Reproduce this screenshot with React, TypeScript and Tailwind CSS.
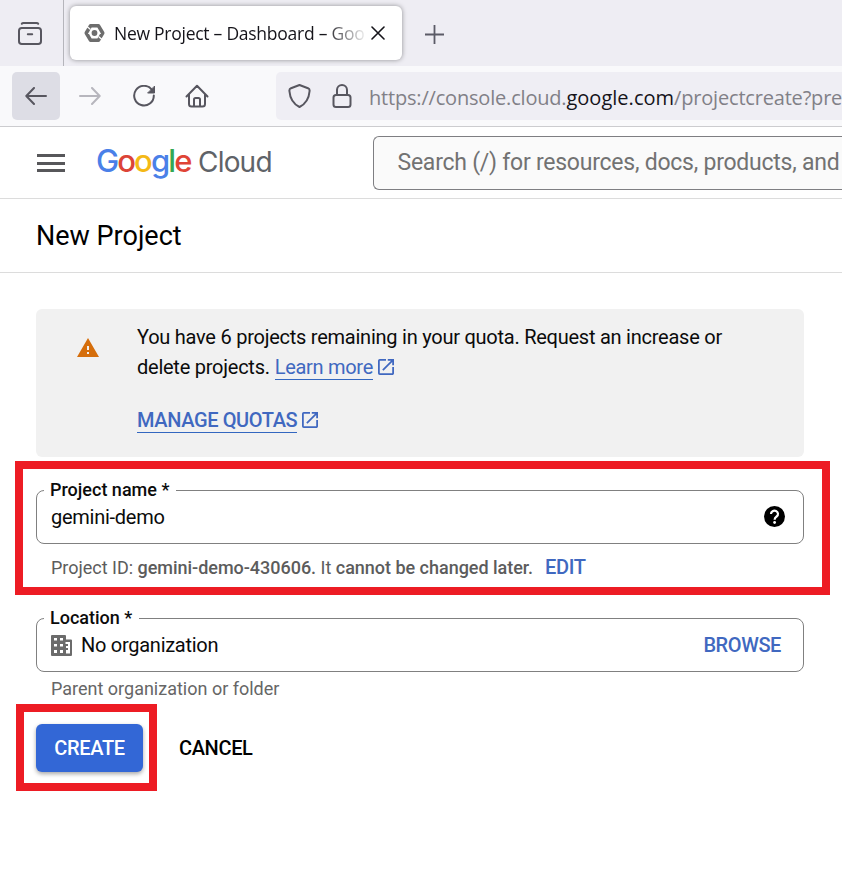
import React from "react";

const roboto = "font-['Roboto','Liberation_Sans',sans-serif]";
const segoe = "font-['Open_Sans','Noto_Sans',sans-serif]";

function Launch({ className }: { className: string }) {
  return (
    <svg viewBox="3 3 18 18" className={className} fill="currentColor">
      <path d="M19 19H5V5h7V3H5a2 2 0 0 0-2 2v14a2 2 0 0 0 2 2h14c1.1 0 2-.9 2-2v-7h-2v7zM14 3v2h3.59l-9.83 9.83 1.41 1.41L19 6.41V10h2V3h-7z" />
    </svg>
  );
}

function TabBar() {
  return (
    <div className={`flex h-[66px] bg-[#eeedf3] ${segoe}`}>
      <div className="flex h-full w-16 shrink-0 border-r border-[#b5b5bb] pl-[18px] pt-[22px]">
        <svg width="24" height="24" viewBox="0 0 24 24" fill="none" stroke="#57565f" strokeWidth="2" strokeLinecap="round">
          <path d="M3.800 1.800Q4.200 1 5.500 1h13Q19.800 1 20.200 1.800M9.800 12.200h4.400" />
          <rect x="1" y="6" width="22" height="16" rx="2.800" />
        </svg>
      </div>
      <div className="ml-1.5 mt-1.5 flex h-[54px] w-[332px] items-center rounded-[6px] bg-white pl-3.5 shadow-[0_0_5px_rgba(0,0,0,0.4)]">
        <svg width="21" height="20" viewBox="0 0 21 20">
          <path fill="none" stroke="#6d6d6d" strokeWidth="3.600" strokeLinejoin="round" d="M6.500 2.800h8l4.200 7.200-4.200 7.200h-8L2.300 10z" />
          <path stroke="#fff" strokeWidth="1.200" d="m3 3.500 3.500 3M18 16.500l-3.500-3" />
          <circle cx="10.500" cy="10" r="2.900" fill="#6d6d6d" />
        </svg>
        <div className="ml-[9px] w-[254px] overflow-hidden whitespace-nowrap text-[17.5px] tracking-[-0.260px] text-[#15141a] [mask-image:linear-gradient(to_right,black_210px,transparent_254px)]">
          New Project – Dashboard – Goo
        </div>
        <svg className="ml-[3px]" width="14" height="14" viewBox="0 0 14 14" stroke="#15141a" strokeWidth="1.600" strokeLinecap="round">
          <path d="m1 1 12 12M13 1 1 13" />
        </svg>
      </div>
      <svg className="ml-[23px] mt-[25px]" width="19" height="19" viewBox="0 0 19 19" stroke="#5b5b66" strokeWidth="1.800">
        <path d="M9.500 0v19M0 9.500h19" />
      </svg>
    </div>
  );
}

function Toolbar() {
  return (
    <div className={`flex h-[61px] items-center border-b border-[#cccccf] bg-[#f9f9fb] ${segoe}`}>
      <div className="ml-3 flex size-12 shrink-0 items-center justify-center rounded-[5px] bg-[#dddde5]">
        <svg width="22" height="18" viewBox="0 0 22 18" fill="none" stroke="#57565f" strokeWidth="2" strokeLinecap="round" strokeLinejoin="round">
          <path d="M21 9H1.500M9 1 1.300 9 9 17" />
        </svg>
      </div>
      <svg className="ml-[19px] shrink-0" width="22" height="18" viewBox="0 0 22 18" fill="none" stroke="#b7b6bd" strokeWidth="2" strokeLinecap="round" strokeLinejoin="round">
        <path d="M1 9h19.500M13 1l7.700 8L13 17" />
      </svg>
      <svg className="ml-8 shrink-0" width="23" height="22" viewBox="0 0 23 22" fill="none" stroke="#57565f" strokeWidth="2" strokeLinecap="round">
        <path d="M18.800 4.700A9.800 9.800 0 1 0 20.800 10.500" />
        <path d="M21.500 1.500V8H15z" fill="#57565f" strokeWidth="1" strokeLinejoin="round" />
      </svg>
      <svg className="ml-[29px] shrink-0" width="24" height="24" viewBox="0 0 24 24" fill="none" stroke="#57565f" strokeWidth="2" strokeLinecap="round" strokeLinejoin="round">
        <path d="M1.500 12.500 12 1.800l10.500 10.700M4 10.500V20a2.500 2.500 0 0 0 2.500 2.500h11A2.500 2.500 0 0 0 20 20v-9.500M9 22v-6.500q0-1.500 1.500-1.500h3q1.500 0 1.500 1.500V22" />
      </svg>
      <div className="ml-[67px] flex h-12 min-w-0 flex-1 items-center overflow-hidden rounded-l-[5px] bg-[#efeef4] pl-[12px]">
        <svg className="shrink-0" width="23" height="24" viewBox="0 0 23 24" fill="none" stroke="#57565f" strokeWidth="2" strokeLinejoin="round">
          <path d="M11.500 1 20 4.200Q21.800 5 21.600 7C21 14.500 17.500 20 11.500 23 5.500 20 2 14.500 1.400 7Q1.200 5 3 4.200z" />
        </svg>
        <svg className="ml-[21px] shrink-0" width="20" height="24" viewBox="0 0 20 24" fill="none" stroke="#57565f" strokeWidth="2">
          <rect x="1.500" y="11" width="17" height="12" rx="2.500" />
          <path d="M5 11V6a5 5 0 0 1 10 0v5" />
        </svg>
        <div className="ml-[17px] whitespace-nowrap pt-[3px] text-[20px] tracking-[-0.190px] text-[#818087]">
          https://console.cloud.<span className="tracking-[0.020px] text-[#15141a]">google.com</span>/projectcreate?pre
        </div>
      </div>
    </div>
  );
}

function CloudHeader() {
  return (
    <header className="flex h-[72px] border-b border-[#dcdcdc] bg-white">
      <div className="ml-[37px] mt-[27px] flex h-[18px] w-7 shrink-0 flex-col justify-between">
        <i className="h-[3px] bg-[#57575a]" />
        <i className="h-[3px] bg-[#57575a]" />
        <i className="h-[3px] bg-[#57575a]" />
      </div>
      <div className="ml-[31px] mt-[14px] flex w-[181px] shrink-0 items-baseline whitespace-nowrap font-['Inter',sans-serif] leading-[40px]">
        <span className="w-[102px] text-[31px] font-medium tracking-[-1.900px]">
          <span className="text-[#4a80e8]">G</span>
          <span className="text-[#dc4437]">o</span>
          <span className="text-[#f4b916]">o</span>
          <span className="text-[#4a80e8]">g</span>
          <span className="text-[#34a853]">l</span>
          <span className="text-[#e04436]">e</span>
        </span>
        <span className="text-[28px] tracking-[-0.800px] text-[#5f6368]">Cloud</span>
      </div>
      <div className="ml-24 mt-[9px] flex h-[54px] min-w-0 flex-1 items-center overflow-hidden rounded-l-[6px] border border-r-0 border-[#7e7e82] bg-[#fafafa] pl-[23.5px]">
        <span className="whitespace-nowrap text-[23px] tracking-[-0.240px] text-[#727272]">Search (/) for resources, docs, products, and</span>
      </div>
    </header>
  );
}

function QuotaBanner() {
  return (
    <section className="flex h-[148px] rounded-[6px] bg-[#f1f1f1]">
      <svg className="ml-[41px] mt-[29px] shrink-0" width="22" height="19" viewBox="1 2 22 19" fill="#d56e0c">
        <path d="M1 21h22L12 2 1 21zm12-3h-2v-2h2v2zm0-4h-2v-4h2v4z" />
      </svg>
      <div className="ml-[38px] pt-[13px] text-[20px] leading-[30px] tracking-[-0.245px] text-[#0b0b0b]">
        <div className="whitespace-nowrap">You have 6 projects remaining in your quota. Request an increase or</div>
        <div className="flex h-[30px] items-center whitespace-nowrap">
          delete projects.
          <a className="ml-[5px] h-[26px] border-b border-[#3367c0] leading-[27px] tracking-[-0.300px] text-[#4068c0]">Learn more</a>
          <Launch className="ml-[5px] size-4 text-[#4068c0]" />
        </div>
        <div className="mt-[23px] flex h-[30px] items-center font-medium tracking-[-0.370px] text-[#4068c0]">
          <a className="h-[26px] border-b border-[#3367c0] leading-[27px]">MANAGE QUOTAS</a>
          <Launch className="ml-[4.5px] size-4" />
        </div>
      </div>
    </section>
  );
}

function Field({ label, children }: { label: string; children: React.ReactNode }) {
  return (
    <div className="relative flex h-[54px] items-center rounded-[8px] border border-[#808080] pl-3.5 text-[20px] tracking-[-0.270px] text-[#0b0b0b]">
      <label className="absolute -top-[13px] left-[7px] bg-white px-[6px] pr-[7px] text-[18px] font-medium leading-6 tracking-normal">{label}</label>
      {children}
    </div>
  );
}

export default function App() {
  return (
    <div className={`relative h-[880px] w-[842px] overflow-hidden bg-white ${roboto}`}>
      <TabBar />
      <Toolbar />
      <CloudHeader />
      <div className="flex h-[74px] items-center border-b border-[#dcdcdc] pl-9 pt-[2px]">
        <h1 className="text-[27px] text-black">New Project</h1>
      </div>
      <main className="ml-9 mt-9 w-[768px]">
        <QuotaBanner />
        <div className="mt-[33px]">
          <Field label="Project name *">
            <span>gemini-demo</span>
            <svg className="mb-px ml-auto mr-[18px]" width="21" height="21" viewBox="0 0 21 21" fill="none">
              <circle cx="10.500" cy="10.500" r="10.500" fill="#000" />
              <path d="M7 8a3.500 3.200 0 1 1 5.600 2.500C11.200 11.500 10.600 12 10.600 13.700" stroke="#fff" strokeWidth="2.200" />
              <circle cx="10.600" cy="16.500" r="1.400" fill="#fff" />
            </svg>
          </Field>
        </div>
        <p className="mt-[11px] h-6 whitespace-nowrap pl-[15px] text-[18px] leading-6 tracking-[-0.020px] text-[#5c5c5c]">
          Project ID: <b className="font-medium">gemini-demo-430606.</b> It <b className="font-medium">cannot be changed later.</b>
          <a className="ml-3 text-[20px] font-medium tracking-[-0.300px] text-[#4068c0]">EDIT</a>
        </p>
        <div className="mt-[39px]">
          <Field label="Location *">
            <svg className="mr-[9px]" width="21" height="21" viewBox="0 0 21 21" fill="#6b6b6b">
              <path fillRule="evenodd" d="M1 0h13q1 0 1 1v3.500h5q1 0 1 1V20q0 1-1 1H1q-1 0-1-1V1q0-1 1-1zM3 3v2.500h3V3zM9 3v2.500h3V3zM3 9v2.500h3V9zM9 9v2.500h3V9zM3 15v3h3v-3zM9 15v3h3v-3zM14.500 7v2H17v2h-2v2h2v2h-2v3.500h4V7z" />
            </svg>
            <span>No organization</span>
            <a className="mb-px ml-auto mr-[22px] font-medium tracking-[-0.400px] text-[#4068c0]">BROWSE</a>
          </Field>
        </div>
        <p className="mt-[5px] h-6 pl-[15px] text-[18px] leading-6 text-[#666]">Parent organization or folder</p>
        <div className="mt-[23px] flex h-12 items-center text-[20px] font-medium tracking-[-0.350px]">
          <button className="h-12 w-[107px] rounded-[6px] bg-[#3367d6] text-white shadow-[0_2px_4px_rgba(0,0,0,0.35)]">CREATE</button>
          <button className="ml-9 text-black">CANCEL</button>
        </div>
      </main>
      <div className="pointer-events-none absolute left-[15px] top-[461px] h-[134px] w-[815px] border-8 border-[#ed1c24]" />
      <div className="pointer-events-none absolute left-[16px] top-[704px] h-[87px] w-[141px] border-8 border-[#ed1c24]" />
    </div>
  );
}
